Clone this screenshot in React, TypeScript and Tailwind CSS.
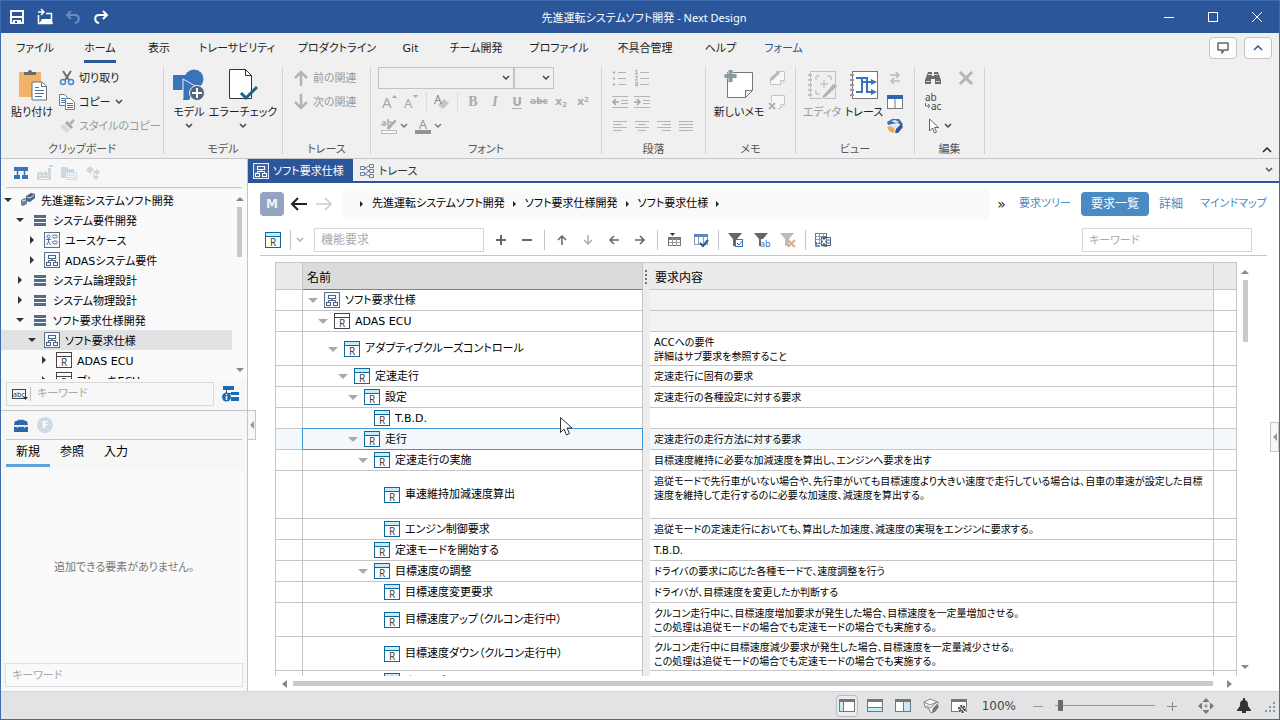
import { ReactNode } from 'react';
import clsx from 'clsx';

type SvgProps = { w?: number; h?: number; children: ReactNode; className?: string };

function Svg({ w = 16, h = 16, children, className }: SvgProps) {
  return (
    <svg width={w} height={h} viewBox={`0 0 ${w} ${h}`} fill="none" className={clsx('shrink-0 overflow-visible', className)} aria-hidden="true">
      {children}
    </svg>
  );
}

/* ---------- shared icons ---------- */

const ChevronDown = ({ color = '#444' }: { color?: string }) => (
  <Svg w={8} h={6}>
    <path d="M1 1l3 3 3-3" stroke={color} strokeWidth="1.5" />
  </Svg>
);

const RIcon = ({ dark }: { dark?: boolean }) => (
  <Svg>
    <rect x="0.5" y="0.5" width="15" height="15" fill="#fff" stroke={dark ? '#4a4048' : '#0f6a9c'} />
    {!dark && <rect x="1" y="1" width="14" height="3" fill="#c8ebf7" />}
    <path d="M1 4.5h14" stroke={dark ? '#4a4048' : '#0f6a9c'} />
    <text x="8" y="14" fontSize="10" textAnchor="middle" fill="#444" fontFamily="Noto Sans, sans-serif">R</text>
  </Svg>
);

const DiagramIcon = ({ light }: { light?: boolean }) => (
  <Svg>
    <rect x="0.5" y="0.5" width="15" height="15" fill={light ? '#47689c' : '#f4f7fa'} stroke={light ? '#e5ebf4' : '#5b6f8c'} />
    <g stroke={light ? '#fff' : '#4d6485'}>
      <rect x="4.5" y="3.5" width="7" height="3" />
      <rect x="2.5" y="10.5" width="4" height="3" />
      <rect x="9.5" y="10.5" width="4" height="3" />
      <path d="M8 7v1.5M4.5 10.5V8.5h7v2" />
    </g>
  </Svg>
);

const UseCaseIcon = () => (
  <Svg>
    <rect x="0.5" y="0.5" width="15" height="15" fill="#f8fafc" stroke="#5b6f8c" />
    <g stroke="#5b6f8c">
      <circle cx="4.5" cy="4.5" r="1.5" />
      <path d="M2 7.5h5M4.5 6v4M2.5 13l2-3 2 3" />
      <ellipse cx="11" cy="4.5" rx="2.5" ry="1.5" />
      <ellipse cx="11" cy="10.5" rx="2.5" ry="1.5" />
    </g>
  </Svg>
);

const LayersIcon = () => (
  <Svg w={12} h={11}>
    <path d="M0 0h12v3H0zM0 4h12v3H0zM0 8h12v3H0z" fill="#556b8a" />
  </Svg>
);

const ProjectIcon = () => (
  <Svg>
    <path d="M1 8l4-2 2 1v5l-4 2-2-1z" fill="#6d7f99" />
    <path d="M6 4l5-3 4 1v4l-5 4-4-1z" fill="#4d6485" />
    <path d="M7 5l3 1 4-3" stroke="#dfe6ee" />
    <path d="M2 9l4-1" stroke="#dfe6ee" />
  </Svg>
);

/* ---------- title bar ---------- */

function TitleBar() {
  return (
    <header className="flex h-8 shrink-0 items-center bg-[#2b579a] text-white">
      <div className="flex flex-1 items-center gap-3 pl-2">
        <button aria-label="保存">
          <Svg>
            <path d="M2 2h12v12H2z" stroke="#fff" strokeWidth="2" />
            <path d="M2 8h12" stroke="#fff" strokeWidth="2" />
            <path d="M4 11h8v4H4z" fill="#fff" />
            <path d="M6 12h2v2H6z" fill="#2b579a" />
          </Svg>
        </button>
        <button aria-label="開く">
          <Svg>
            <path d="M1.5 6v8.5h13V4.5H9" stroke="#fff" strokeWidth="1.5" />
            <path d="M2 15l3-5h9l2 5z" fill="#fff" />
            <path d="M1 3h6M4 0l3 3-3 3" stroke="#fff" strokeWidth="1.5" />
          </Svg>
        </button>
        <button aria-label="元に戻す">
          <Svg>
            <path d="M6 2L2 6l4 4M2 6h8c5 0 5 7 0 8" stroke="#6d8cbd" strokeWidth="2" />
          </Svg>
        </button>
        <button aria-label="やり直し">
          <Svg>
            <path d="M10 2l4 4-4 4M14 6H6c-5 0-5 7 0 8" stroke="#fff" strokeWidth="2" />
          </Svg>
        </button>
      </div>
      <h1 className="pt-0.5 font-['Noto_Sans','Noto_Sans_CJK_JP',sans-serif] text-[11px]">先進運転システムソフト開発 - Next Design</h1>
      <div className="flex flex-1 items-center justify-end">
        <button aria-label="最小化" className="grid h-8 w-11 place-items-center">
          <Svg w={10} h={10}><path d="M0 5.5h10" stroke="#fff" /></Svg>
        </button>
        <button aria-label="最大化" className="grid h-8 w-11 place-items-center">
          <Svg w={10} h={10}><rect x="0.5" y="0.5" width="9" height="9" stroke="#fff" /></Svg>
        </button>
        <button aria-label="閉じる" className="grid h-8 w-11 place-items-center">
          <Svg w={10} h={10}><path d="M0 0l10 10M10 0L0 10" stroke="#fff" /></Svg>
        </button>
      </div>
    </header>
  );
}

/* ---------- ribbon ---------- */

const menuTabs = [
  { label: 'ファイル', width: 'w-[68px]' },
  { label: 'ホーム', width: 'w-[62px]', active: true },
  { label: '表示', width: 'w-[56px]' },
  { label: 'トレーサビリティ', width: 'w-[100px]' },
  { label: 'プロダクトライン', width: 'w-[100px]' },
  { label: 'Git', width: 'w-[47px]' },
  { label: 'チーム開発', width: 'w-[84px]' },
  { label: 'プロファイル', width: 'w-[82px]' },
  { label: '不具合管理', width: 'w-[90px]' },
  { label: 'ヘルプ', width: 'w-[61px]' },
  { label: 'フォーム', width: 'w-[65px]', accent: true },
];

function MenuTabs() {
  return (
    <nav className="flex h-[33px] shrink-0 items-center">
      {menuTabs.map((tab) => (
        <button key={tab.label} className={clsx('flex h-full justify-center whitespace-nowrap pt-1', tab.width, tab.accent ? 'text-[#2b579a]' : 'text-[#222]')}>
          <span className={clsx('h-[26px] border-b-[3px] leading-6', tab.active ? 'border-[#2b579a]' : 'border-transparent')}>{tab.label}</span>
        </button>
      ))}
      <div className="ml-auto flex gap-[7px] pr-[7px] pb-[3px]">
        <button aria-label="フィードバック" className="grid h-[22px] w-7 place-items-center rounded-sm border border-[#c4c4c4] bg-[#fdfdfd]">
          <Svg w={12} h={12}><path d="M1 1h10v7H7l-2 3V8H1z" stroke="#666" strokeWidth="1.5" strokeLinejoin="round" /></Svg>
        </button>
        <button aria-label="リボンを閉じる" className="grid h-[22px] w-7 place-items-center rounded-sm border border-[#c4c4c4] bg-[#fdfdfd]">
          <Svg w={10} h={6}><path d="M1 5l4-4 4 4" stroke="#2b579a" strokeWidth="1.5" /></Svg>
        </button>
      </div>
    </nav>
  );
}

function Group({ label, width, children }: { label: string; width: string; children: ReactNode }) {
  return (
    <>
      <section className={clsx('flex shrink-0 flex-col', width)}>
        <div className="flex h-[72px] shrink-0">{children}</div>
        <div className="h-5 shrink-0 text-center leading-6 text-[#555]">{label}</div>
      </section>
      <div className="mt-px h-[87px] w-px shrink-0 bg-[#d2d2d2]" />
    </>
  );
}

function BigButton({ label, icon, width, menu, disabled }: { label: string; icon: ReactNode; width: string; menu?: boolean; disabled?: boolean }) {
  return (
    <button disabled={disabled} className={clsx('flex shrink-0 flex-col items-center whitespace-nowrap pt-[3px]', width, disabled ? 'text-[#999]' : 'text-[#222]')}>
      {icon}
      <span className="mt-[3px] leading-[18px]">{label}</span>
      {menu && <span className="mt-px leading-3"><ChevronDown /></span>}
    </button>
  );
}

function RowButton({ label, icon, disabled, menu }: { label: string; icon: ReactNode; disabled?: boolean; menu?: boolean }) {
  return (
    <button disabled={disabled} className={clsx('flex h-6 items-center gap-1 whitespace-nowrap', disabled ? 'text-[#999]' : 'text-[#222]')}>
      {icon}
      <span className="pt-0.5">{label}</span>
      {menu && <ChevronDown />}
    </button>
  );
}

function Tool({ label, children }: { label: string; children: ReactNode }) {
  return (
    <button aria-label={label} className="grid h-6 w-[22px] shrink-0 place-items-center text-[#a6adb3]">
      {children}
    </button>
  );
}

const lineSets = {
  left: 'M1 2.5h14M1 5.5h9M1 8.5h14M1 11.5h9',
  center: 'M1 2.5h14M4 5.5h8M1 8.5h14M4 11.5h8',
  right: 'M1 2.5h14M6 5.5h9M1 8.5h14M6 11.5h9',
  full: 'M1 2.5h14M1 5.5h14M1 8.5h14M1 11.5h14',
};

const Lines = ({ d }: { d: string }) => (
  <Svg w={16} h={14}><path d={d} stroke="#b4b4b4" /></Svg>
);

function Combo({ label, width }: { label: string; width: string }) {
  return (
    <div className={clsx('relative', width)}>
      <select aria-label={label} className="block h-[22px] w-full appearance-none border border-[#c3c3c3] bg-[#f0f0f0]">
        <option></option>
      </select>
      <span className="pointer-events-none absolute top-2 right-1"><ChevronDown /></span>
    </div>
  );
}

function Ribbon() {
  return (
    <div className="flex h-[92px] shrink-0">
      <Group label="クリップボード" width="w-[162px]">
        <BigButton
          width="w-[57px] pl-[5px]"
          label="貼り付け"
          icon={
            <Svg w={32} h={32}>
              <rect x="3" y="3" width="22" height="25" rx="1" fill="#f2b366" />
              <path d="M8 6V3h4a2 2 0 014 0h4v3z" fill="#6b6b6b" />
              <path d="M16 13h10l4.5 4v14H16z" fill="#fff" stroke="#6f6f6f" />
              <path d="M25.5 13.5v4h5" stroke="#6f6f6f" />
              <path d="M19 18.5h4M19 21.5h9M19 24.5h9M19 27.5h7" stroke="#3a74b8" />
            </Svg>
          }
        />
        <div className="flex flex-col pl-[1px]">
          <RowButton
            label="切り取り"
            icon={
              <Svg>
                <path d="M4 1l6 9M12 1L6 10" stroke="#6b6b6b" strokeWidth="2" />
                <circle cx="4" cy="12" r="2.5" stroke="#4a86c5" strokeWidth="1.5" />
                <circle cx="12" cy="12" r="2.5" stroke="#4a86c5" strokeWidth="1.5" />
              </Svg>
            }
          />
          <RowButton
            label="コピー"
            menu
            icon={
              <Svg>
                <path d="M0.5 0.5h5l3 3v8h-8z" fill="#fff" stroke="#777" />
                <path d="M2 4.5h4M2 6.5h4M2 8.5h4" stroke="#3a74b8" />
                <path d="M6.5 4.5h5l4 4v7h-9z" fill="#fff" stroke="#777" />
                <path d="M8 9.5h6M8 11.5h6M8 13.5h6" stroke="#3a74b8" />
              </Svg>
            }
          />
          <RowButton
            label="スタイルのコピー"
            disabled
            icon={
              <Svg>
                <path d="M10 5l4-4 2 2-4 4z" fill="#b5b5b5" />
                <path d="M8 3l6 6-2 2-6-6z" fill="#a8a8a8" />
                <path d="M5 6l6 6-4 3-6-7z" fill="#d5d9db" />
              </Svg>
            }
          />
        </div>
      </Group>

      <Group label="モデル" width="w-[118px]">
        <BigButton
          width="w-[46px] pl-1"
          label="モデル"
          menu
          icon={
            <Svg w={32} h={32}>
              <rect x="0" y="6" width="16" height="15" fill="#3a74b8" />
              <circle cx="21" cy="10" r="9.5" fill="#3a74b8" />
              <path d="M10 12l13 7-7 12h-6z" fill="#3a74b8" />
              <path d="M10 30V10l14 8" stroke="#f0f0f0" />
              <circle cx="24" cy="24" r="7.5" fill="#55657d" stroke="#f0f0f0" />
              <path d="M24 19v10M19 24h10" stroke="#fff" strokeWidth="2" />
            </Svg>
          }
        />
        <BigButton
          width="w-[66px]"
          label="エラーチェック"
          menu
          icon={
            <Svg w={28} h={32}>
              <path d="M0.5 0.5h16l6 6v23H0.5z" fill="#fff" stroke="#333" />
              <path d="M16.5 0.5v6h6" stroke="#333" />
              <path d="M12 24l5 5 11-11" stroke="#17628f" strokeWidth="3" />
            </Svg>
          }
        />
      </Group>

      <Group label="トレース" width="w-[87px]">
        <div className="flex flex-col pl-2.5">
          <RowButton disabled label="前の関連" icon={<Svg><path d="M8 16V2M2 8l6-6 6 6" stroke="#b0b4b8" strokeWidth="2.5" /></Svg>} />
          <RowButton disabled label="次の関連" icon={<Svg><path d="M8 0v14M2 8l6 6 6-6" stroke="#b0b4b8" strokeWidth="2.5" /></Svg>} />
        </div>
      </Group>

      <Group label="フォント" width="w-[230px]">
        <div className="flex flex-col pl-[7px]">
          <div className="flex h-6 items-center">
            <Combo label="フォント名" width="w-[136px]" />
            <Combo label="フォントサイズ" width="w-10" />
          </div>
          <div className="flex h-6 items-center">
            <Tool label="拡大">
              <Svg>
                <text x="1" y="14" fontSize="15" fill="#a5a9ac" fontFamily="Noto Sans, sans-serif">A</text>
                <path d="M11 4l2.5-3L16 4z" fill="#aaa" />
              </Svg>
            </Tool>
            <Tool label="縮小">
              <Svg>
                <text x="1" y="14" fontSize="13" fill="#a5a9ac" fontFamily="Noto Sans, sans-serif">A</text>
                <path d="M10 1l2.5 3L15 1z" fill="#aaa" />
              </Svg>
            </Tool>
            <span className="mx-1 h-5 w-px bg-[#dcdcdc]" />
            <Tool label="書式クリア">
              <Svg>
                <path d="M4 11l6-6 5 4-6 6z" fill="#c6c6c6" />
                <text x="0" y="10" fontSize="12" fill="#888" fontFamily="Noto Sans, sans-serif">A</text>
              </Svg>
            </Tool>
            <span className="mx-1 h-5 w-px bg-[#dcdcdc]" />
            <Tool label="太字"><span className="font-['Liberation_Serif',serif] text-sm font-bold">B</span></Tool>
            <Tool label="斜体"><span className="font-['Liberation_Serif',serif] text-sm font-bold italic">I</span></Tool>
            <Tool label="下線"><span className="text-xs font-bold underline underline-offset-2">U</span></Tool>
            <Tool label="取り消し線"><span className="text-[9px] font-bold line-through">abc</span></Tool>
            <Tool label="下付き"><span className="leading-3 font-bold">x<sub className="text-[7px]">2</sub></span></Tool>
            <Tool label="上付き"><span className="leading-3 font-bold">x<sup className="text-[7px]">2</sup></span></Tool>
          </div>
          <div className="flex h-6 items-center">
            <Tool label="蛍光ペン">
              <Svg>
                <text x="0" y="8" fontSize="9" fontWeight="bold" fill="#aaa" fontFamily="Noto Sans, sans-serif">ab</text>
                <path d="M6 10l8-8 1 1-7 8z" fill="#aaa" stroke="#aaa" />
                <rect x="0.5" y="12.5" width="15" height="3" stroke="#bbb" fill="#fafafa" />
              </Svg>
            </Tool>
            <ChevronDown color="#777" />
            <span className="w-1" />
            <Tool label="文字色">
              <Svg>
                <text x="8" y="11" fontSize="13" textAnchor="middle" fill="#999" fontFamily="Noto Sans, sans-serif">A</text>
                <rect x="0" y="12" width="16" height="4" fill="#929292" />
              </Svg>
            </Tool>
            <ChevronDown color="#777" />
          </div>
        </div>
      </Group>

      <Group label="段落" width="w-[103px]">
        <div className="flex flex-col pl-[7px]">
          <div className="flex">
            <Tool label="箇条書き">
              <Svg>
                <path d="M6 2.5h8M6 8.5h8M6 14.5h8" stroke="#b4b4b4" />
                <path d="M1 1.5h2v2H1zM1 7.5h2v2H1zM1 13.5h2v2H1z" fill="#a8a8a8" />
              </Svg>
            </Tool>
            <Tool label="段落番号">
              <Svg>
                <path d="M6 2.5h9M6 8.5h9M6 14.5h9" stroke="#b4b4b4" />
                <path d="M1 1l1.5-1v4M1 4h3M1 6.5h2.5v1.5l-2.5 2h3M1 12.5h2.5v3.5H1M1.5 14.5h2" stroke="#aaa" />
              </Svg>
            </Tool>
          </div>
          <div className="flex">
            <Tool label="インデント解除">
              <Svg w={16} h={14}>
                <path d="M0 1.5h16M9 5.5h7M9 8.5h7M0 12.5h16" stroke="#b4b4b4" />
                <path d="M1 7h6M4 4L1 7l3 3" stroke="#a5a5a5" strokeWidth="1.5" />
              </Svg>
            </Tool>
            <Tool label="インデント">
              <Svg w={16} h={14}>
                <path d="M0 1.5h16M9 5.5h7M9 8.5h7M0 12.5h16" stroke="#b4b4b4" />
                <path d="M0 7h6M3 4l3 3-3 3" stroke="#a5a5a5" strokeWidth="1.5" />
              </Svg>
            </Tool>
          </div>
          <div className="flex">
            <Tool label="左揃え"><Lines d={lineSets.left} /></Tool>
            <Tool label="中央揃え"><Lines d={lineSets.center} /></Tool>
            <Tool label="右揃え"><Lines d={lineSets.right} /></Tool>
            <Tool label="両端揃え"><Lines d={lineSets.full} /></Tool>
          </div>
        </div>
      </Group>

      <Group label="メモ" width="w-[89px]">
        <BigButton
          width="w-[60px] pl-[6px]"
          label="新しいメモ"
          icon={
            <Svg w={32} h={32}>
              <path d="M4.5 3.5h25v18l-7 7h-18z" fill="#fff" stroke="#777" />
              <path d="M22.5 28.5v-7h7z" fill="#f0f0f0" stroke="#777" />
              <path d="M7.5 0v14M0.5 7h14" stroke="#f0f0f0" strokeWidth="5" />
              <path d="M7.5 1v12M1.5 7h12" stroke="#8b9a9e" strokeWidth="4" />
            </Svg>
          }
        />
        <div className="flex flex-col">
          <Tool label="メモ編集">
            <Svg>
              <path d="M7 1.5h8.5v9l-4 4h-10V8" fill="#f8f8f8" stroke="#c4c4c4" />
              <path d="M11.5 14v-3.5h4" stroke="#c4c4c4" />
              <path d="M1 11l1-4 7-6 2 2-7 7z" fill="#b8b8b8" />
            </Svg>
          </Tool>
          <Tool label="メモ削除">
            <Svg>
              <path d="M2.5 8V1.5h13v9l-4 4H9" fill="#f8f8f8" stroke="#c4c4c4" />
              <path d="M11.5 14v-3.5h4" stroke="#c4c4c4" />
              <path d="M0 9l6 6M6 9l-6 6" stroke="#b3b3b3" strokeWidth="2" />
            </Svg>
          </Tool>
        </div>
      </Group>

      <Group label="ビュー" width="w-[118px]">
        <BigButton
          width="w-[48px] pl-1"
          label="エディタ"
          disabled
          icon={
            <Svg w={32} h={32}>
              <rect x="4.5" y="2.5" width="25" height="27" stroke="#c0c0c0" />
              <path d="M4 5v24" stroke="#c0c0c0" strokeWidth="4" strokeDasharray="2 3" />
              <path d="M10 11V7h4M21 7h4v4M10 21v4h4" stroke="#b5b5b5" />
              <path d="M18 11v8M14 15h8" stroke="#b5b5b5" />
              <path d="M15 31l2-5 11-12 4 3-12 11z" fill="#b3b3b3" stroke="#f0f0f0" />
            </Svg>
          }
        />
        <BigButton
          width="w-[40px]"
          label="トレース"
          icon={
            <Svg w={32} h={32}>
              <rect x="4.5" y="2.5" width="25" height="27" fill="#fff" stroke="#777" />
              <path d="M4 5v24" stroke="#999" strokeWidth="4" strokeDasharray="2 3" />
              <path d="M8 9h11v14h5M8 23h6V13h10M14 13V10" stroke="#3a74b8" strokeWidth="2" />
              <path d="M23 10l6 3-6 3zM23 20l6 3-6 3z" fill="#3a74b8" />
            </Svg>
          }
        />
        <div className="flex flex-col">
          <Tool label="切替">
            <Svg w={14} h={14}>
              <path d="M2 4h9M8 1l3 3-3 3M12 10H3M6 7l-3 3 3 3" stroke="#b8bcc0" strokeWidth="1.5" />
            </Svg>
          </Tool>
          <Tool label="分割">
            <Svg w={16} h={14}>
              <rect x="0.5" y="0.5" width="15" height="13" fill="#fff" stroke="#777" />
              <rect x="0" y="0" width="16" height="4" fill="#2f66b0" />
              <path d="M8 4v10" stroke="#777" />
            </Svg>
          </Tool>
          <Tool label="スタイル">
            <Svg>
              <path d="M0 4l5-3 7 0 4 5-1 2-4-3-6 1-4 1z" fill="#3a6fb5" />
              <path d="M4 3l4-1 4 2-3 1z" fill="#e4edf7" />
              <path d="M0 9l3-1 4 2 1 3-2 2-4-2z" fill="#f0a94c" />
              <path d="M3 7l5 1 3-2-3 4z" fill="#cfe0f2" />
              <path d="M8 15l1-4 5-5 2 3-5 6z" fill="#2b579a" />
            </Svg>
          </Tool>
        </div>
      </Group>

      <Group label="編集" width="w-[69px]">
        <div className="flex flex-col pl-[7px]">
          <div className="flex">
            <Tool label="検索">
              <Svg>
                <path d="M3 2h4v4h2V2h4l3 8v4h-6V9H6v5H0v-4z" fill="#6b6b6b" />
                <path d="M1 11.5h4M11 11.5h4M3 4.5h4M9 4.5h4" stroke="#d0d0d0" />
              </Svg>
            </Tool>
            <span className="w-[11px]" />
            <Tool label="削除">
              <Svg w={14} h={14}><path d="M1 1l12 12M13 1L1 13" stroke="#b5b5b5" strokeWidth="3" /></Svg>
            </Tool>
          </div>
          <Tool label="置換">
            <Svg w={18} h={18}>
              <g fontSize="10" fill="#444" fontFamily="Noto Sans, sans-serif">
                <text x="1" y="8">ab</text>
                <text x="7" y="17">ac</text>
              </g>
              <path d="M1.5 10v3h4M4 11l2 2-2 2" stroke="#3a74b8" />
            </Svg>
          </Tool>
          <div className="flex items-center">
            <Tool label="選択">
              <Svg w={12} h={16}><path d="M2.5 1v12l3-3 2 5 2-1-2-4.5h4z" fill="#fff" stroke="#666" /></Svg>
            </Tool>
            <ChevronDown />
          </div>
        </div>
      </Group>
      <button aria-label="リボンを折りたたむ" className="mt-auto mr-[7px] mb-[3px] ml-auto grid h-2.5 w-2.5 place-items-center">
        <Svg w={10} h={6}><path d="M1 5l4-4 4 4" stroke="#222" strokeWidth="1.5" /></Svg>
      </button>
    </div>
  );
}

/* ---------- left pane ---------- */

const modelTree: { label: string; level: number; icon: ReactNode; open?: boolean; selected?: boolean }[] = [
  { label: '先進運転システムソフト開発', level: 0, icon: <ProjectIcon />, open: true },
  { label: 'システム要件開発', level: 1, icon: <LayersIcon />, open: true },
  { label: 'ユースケース', level: 2, icon: <UseCaseIcon /> },
  { label: 'ADASシステム要件', level: 2, icon: <DiagramIcon /> },
  { label: 'システム論理設計', level: 1, icon: <LayersIcon /> },
  { label: 'システム物理設計', level: 1, icon: <LayersIcon /> },
  { label: 'ソフト要求仕様開発', level: 1, icon: <LayersIcon />, open: true },
  { label: 'ソフト要求仕様', level: 2, icon: <DiagramIcon />, open: true, selected: true },
  { label: 'ADAS ECU', level: 3, icon: <RIcon dark /> },
  { label: 'ブレーキECU', level: 3, icon: <RIcon dark /> },
];

const UpArrow = () => <Svg w={8} h={5}><path d="M0 5l4-4 4 4z" fill="#888" /></Svg>;
const DownArrow = () => <Svg w={8} h={5}><path d="M0 0l4 4 4-4z" fill="#888" /></Svg>;

function ModelTree() {
  return (
    <div className="flex h-[189px] bg-[#fafafa]">
      <ul className="min-w-0 flex-1 overflow-hidden">
        {modelTree.map((node) => (
          <li
            key={node.label}
            className={clsx('flex h-5 items-center whitespace-nowrap text-black', node.selected && 'bg-[#e1e2e4]')}
            style={{ paddingLeft: 1 + node.level * 12 }}
          >
            <span className="grid w-3 shrink-0 place-items-center">
              {node.open ? (
                <Svg w={8} h={5}><path d="M0 0h8L4 4z" fill="#333" /></Svg>
              ) : (
                <Svg w={5} h={8}><path d="M0 0v8l4-4z" fill="#333" /></Svg>
              )}
            </span>
            <span className="mr-[5px] ml-1.5 grid w-4 shrink-0 place-items-center">{node.icon}</span>
            <span className="pt-1 leading-4">{node.label}</span>
          </li>
        ))}
      </ul>
      <div className="flex w-[15px] flex-col items-center py-1.5">
        <UpArrow />
        <div className="mt-1.5 h-[50px] w-[5px] bg-[#c9c9c9]" />
        <span className="mt-auto"><DownArrow /></span>
      </div>
    </div>
  );
}

function LeftPane() {
  return (
    <aside className="flex w-[247px] shrink-0 flex-col border-r border-[#c2c4c8] bg-[#f6f7f6]">
      <div className="mx-[5px] mb-0.5 flex h-[29px] shrink-0 items-center gap-2 border-b border-[#c6c6c6] pl-[7px]">
        <button aria-label="モデル">
          <Svg>
            <path d="M1 2h14v4H1z" fill="#3a74b8" />
            <path d="M4.5 6v5M11.5 6v5" stroke="#3a74b8" strokeWidth="1.5" />
            <path d="M1 10h6v4H1zM9 10h6v4H9z" fill="#3a74b8" />
          </Svg>
        </button>
        <button aria-label="プロダクトライン">
          <Svg>
            <path d="M0 15V8l5-2v2l5-2v2h1V3h3v12z" fill="#ccd8df" />
            <path d="M10 1.5h5M2 10.5h2M6 10.5h2M10 10.5h2M2 13.5h10" stroke="#f0f4f6" />
            <path d="M12 1h4" stroke="#ccd8df" strokeWidth="2" />
          </Svg>
        </button>
        <button aria-label="成果物">
          <Svg>
            <path d="M0 2h6l1 2h6v3H5v6H0z" fill="#ccd8df" />
            <rect x="6.5" y="7.5" width="9" height="7" fill="#f6f7f6" stroke="#ccd8df" />
            <path d="M8 10h6M8 12.5h6" stroke="#ccd8df" />
          </Svg>
        </button>
        <button aria-label="構成">
          <Svg>
            <path d="M5 1l4 3-3 3 1 2-3-1-3-3z" fill="#ccd8df" />
            <path d="M8 7h5M9 5v7h3" stroke="#ccd8df" />
            <path d="M12 4l3 3-3 3-3-3zM11 10l3 2-3 3-3-3z" fill="#ccd8df" />
          </Svg>
        </button>
      </div>
      <ModelTree />
      <div className="mt-[3px] mr-2 mb-[3px] ml-[5px] flex h-6 shrink-0 items-center">
        <div className="flex h-6 flex-1 items-center border border-[#d8dadd]">
          <button aria-label="検索条件" className="flex w-6 justify-center border-r border-[#c2c4c8] pl-1">
            <Svg w={18} h={14}>
              <rect x="0.5" y="2.5" width="13" height="9" stroke="#444" />
              <text x="1" y="10" fontSize="7" fill="#333" fontFamily="Noto Sans, sans-serif">abc</text>
              <path d="M11 10h5l-2.5 3z" fill="#333" />
            </Svg>
          </button>
          <input aria-label="モデル検索" placeholder="キーワード" className="min-w-0 flex-1 bg-transparent px-1.5 placeholder:text-[#a8a8a8]" />
        </div>
        <button aria-label="情報" className="ml-2">
          <Svg w={17} h={16}>
            <path d="M1 0h11v4H1zM9 6h8v3H9zM9 11h8v4H9z" fill="#1a6cb5" />
            <path d="M4.5 4v3M4 7.5h5" stroke="#555" />
            <circle cx="4.5" cy="11" r="4.5" fill="#1a6cb5" />
            <path d="M4.5 10v4M4.5 8v1" stroke="#fff" strokeWidth="1.5" />
          </Svg>
        </button>
      </div>

      <div className="mt-px flex flex-1 flex-col border-t border-[#c2c4c8]">
        <div className="mx-[5px] flex h-[29px] items-center gap-2 border-b border-[#c6c6c6] pl-[7px]">
          <button aria-label="ツールボックス">
            <Svg>
              <path d="M5 3.5h6M5 5V3M11 5V3" stroke="#3a74b8" strokeWidth="1.5" />
              <path d="M2 4h12l1 4H1zM1 9h14v6H1z" fill="#2f66b0" />
              <path d="M1 9.5h14M4.5 8v3M11.5 8v3" stroke="#cfe0f2" />
            </Svg>
          </button>
          <button aria-label="F" className="h-4 w-4 rounded-full bg-[#cfdbe2] text-center text-[9px] leading-4 font-bold text-white">F</button>
        </div>
        <div className="flex pl-[5px] text-xs text-black">
          <button className="h-[27px] w-11 border-b-[3px] border-[#5ea3da]">新規</button>
          <button className="h-[27px] w-11 border-b-[3px] border-transparent">参照</button>
          <button className="h-[27px] w-11 border-b-[3px] border-transparent">入力</button>
        </div>
        <div className="mx-1 mt-[3px] flex flex-1 flex-col bg-[#fafafa]">
          <p className="flex flex-1 items-center justify-center pt-1 text-[#777]">追加できる要素がありません。</p>
          <input aria-label="要素検索" placeholder="キーワード" className="mb-1 h-6 w-full border border-[#dcdee0] bg-[#fafafa] px-1.5 placeholder:text-[#a8a8a8]" />
        </div>
      </div>
    </aside>
  );
}

/* ---------- editor ---------- */

const requirements: { name: string; level: number; height: string; text?: string; kind?: string; open?: boolean; selected?: boolean; muted?: boolean }[] = [
  { name: 'ソフト要求仕様', level: 0, height: 'h-[21px]', kind: 'diagram', open: true, muted: true },
  { name: 'ADAS ECU', level: 1, height: 'h-[21px]', kind: 'dark', open: true, muted: true },
  { name: 'アダプティブクルーズコントロール', level: 2, height: 'h-[34px]', open: true, text: 'ACCへの要件\n詳細はサブ要求を参照すること' },
  { name: '定速走行', level: 3, height: 'h-[21px]', open: true, text: '定速走行に固有の要求' },
  { name: '設定', level: 4, height: 'h-[21px]', open: true, text: '定速走行の各種設定に対する要求' },
  { name: 'T.B.D.', level: 5, height: 'h-[21px]' },
  { name: '走行', level: 4, height: 'h-[21px]', open: true, selected: true, text: '定速走行の走行方法に対する要求' },
  { name: '定速走行の実施', level: 5, height: 'h-[21px]', open: true, text: '目標速度維持に必要な加減速度を算出し、エンジンへ要求を出す' },
  {
    name: '車速維持加減速度算出',
    level: 6,
    height: 'h-[48px]',
    text: '追従モードで先行車がいない場合や、先行車がいても目標速度より大きい速度で走行している場合は、自車の車速が設定した目標\n速度を維持して走行するのに必要な加速度、減速度を算出する。\n ',
  },
  { name: 'エンジン制御要求', level: 6, height: 'h-[21px]', text: '追従モードの定速走行においても、算出した加速度、減速度の実現をエンジンに要求する。' },
  { name: '定速モードを開始する', level: 5, height: 'h-[21px]', text: 'T.B.D.' },
  { name: '目標速度の調整', level: 5, height: 'h-[21px]', open: true, text: 'ドライバの要求に応じた各種モードで、速度調整を行う' },
  { name: '目標速度変更要求', level: 6, height: 'h-[21px]', text: 'ドライバが、目標速度を変更したか判断する' },
  { name: '目標速度アップ（クルコン走行中）', level: 6, height: 'h-[34px]', text: 'クルコン走行中に、目標速度増加要求が発生した場合、目標速度を一定量増加させる。\nこの処理は追従モードの場合でも定速モードの場合でも実施する。' },
  { name: '目標速度ダウン（クルコン走行中）', level: 6, height: 'h-[34px]', text: 'クルコン走行中に目標速度減少要求が発生した場合、目標速度を一定量減少させる。\nこの処理は追従モードの場合でも定速モードの場合でも実施する。' },
  { name: 'クルーズコントロール', level: 6, height: 'h-[21px]', text: 'クルーズコントロールシステムのスイッチがオンになったときのみ、クルーズコントロールモードにする。' },
];

function RequirementTable() {
  return (
    <table className="w-full table-fixed border-separate border-spacing-0 border-t border-l border-[#c6c6c6] text-left text-black">
      <colgroup>
        <col className="w-[27px]" />
        <col className="w-[340px]" />
        <col className="w-[7px]" />
        <col />
        <col className="w-[23px]" />
      </colgroup>
      <thead>
        <tr className="h-[27px] bg-[#ebebeb] text-xs">
          <th className="border-r border-b border-[#c6c6c6]"></th>
          <th className="border-r border-b border-r-[#c6c6c6] border-b-[#3c97d9] bg-[#dadcdb] px-1 pt-1 font-normal">名前</th>
          <th className="px-[2px]">
            <Svg w={2} h={16}><path d="M1 1v14" stroke="#777" strokeWidth="2" strokeDasharray="2 2" /></Svg>
          </th>
          <th className="border-r border-b border-[#c6c6c6] px-[5px] pt-1 font-normal">要求内容</th>
          <th className="border-r border-b border-[#c6c6c6]"></th>
        </tr>
      </thead>
      <tbody className="leading-[14px]">
        {requirements.map((row) => (
          <tr key={row.name} className={clsx(row.height, row.selected ? 'bg-[#f3f8fc]' : 'bg-white')}>
            <td className="border-r border-b border-[#c6c6c6]"></td>
            <td className="relative border-r border-b border-[#c6c6c6] p-0">
              <div className="flex items-center whitespace-nowrap" style={{ paddingLeft: 5 + row.level * 10 }}>
                <span className="mt-0.5 w-4 shrink-0">
                  {row.open && <Svg w={10} h={6}><path d="M0 0h10L5 5z" fill="#a7abb0" /></Svg>}
                </span>
                {row.kind === 'diagram' ? <DiagramIcon /> : <RIcon dark={row.kind === 'dark'} />}
                <span className="ml-[5px] pt-px">{row.name}</span>
              </div>
              {row.selected && <span className="pointer-events-none absolute -inset-px border border-[#3c97d9]" />}
            </td>
            <td className="bg-[#ededed]"></td>
            <td className={clsx('overflow-hidden border-r border-b border-[#c6c6c6] px-1 pt-0.5 pb-0 text-[10px] whitespace-pre', row.muted && 'bg-[#f3f3f3]')}>{row.text}</td>
            <td className="border-r border-b border-[#c6c6c6]"></td>
          </tr>
        ))}
      </tbody>
    </table>
  );
}

const Sep = () => <span className="mx-1 h-5 w-px bg-[#c6c6c6]" />;

function EditorButton({ label, children }: { label: string; children: ReactNode }) {
  return (
    <button aria-label={label} className="grid h-6 w-[26px] shrink-0 place-items-center">
      {children}
    </button>
  );
}

const funnel = 'M0 1h14L9 7v7H5V7z';

const Crumb = () => <Svg w={4} h={6}><path d="M0 0v6l3-3z" fill="#222" /></Svg>;

function EditorToolbar() {
  return (
    <div className="mx-3 flex h-[31px] shrink-0 items-center border-b border-[#c6c6c6] pr-[15px] pl-[5px]">
      <RIcon />
      <span className="ml-[9px] h-5 w-px bg-[#c6c6c6]" />
      <span className="mx-[5px]"><ChevronDown color="#aaa" /></span>
      <input aria-label="要求種別" placeholder="機能要求" className="ml-[5px] h-6 w-[170px] border border-[#d5d8da] px-1.5 text-xs placeholder:text-[#aaa]" />
      <div className="flex items-center pl-1">
        <EditorButton label="追加"><Svg w={10} h={10}><path d="M5 0v10M0 5h10" stroke="#666" strokeWidth="2" /></Svg></EditorButton>
        <EditorButton label="削除"><Svg w={10} h={10}><path d="M0 5h10" stroke="#666" strokeWidth="2" /></Svg></EditorButton>
        <Sep />
        <EditorButton label="上へ"><Svg w={10} h={10}><path d="M5 10V1M1 5l4-4 4 4" stroke="#666" strokeWidth="1.5" /></Svg></EditorButton>
        <EditorButton label="下へ"><Svg w={10} h={10}><path d="M5 0v9M1 5l4 4 4-4" stroke="#aaa" strokeWidth="1.5" /></Svg></EditorButton>
        <EditorButton label="左へ"><Svg w={10} h={10}><path d="M10 5H1M5 1L1 5l4 4" stroke="#666" strokeWidth="1.5" /></Svg></EditorButton>
        <EditorButton label="右へ"><Svg w={10} h={10}><path d="M0 5h9M5 1l4 4-4 4" stroke="#666" strokeWidth="1.5" /></Svg></EditorButton>
        <Sep />
        <EditorButton label="列">
          <Svg w={14} h={14}>
            <path d="M2 0h5L4.5 3z" fill="#333" />
            <rect x="0.5" y="4.5" width="12" height="8" stroke="#777" />
            <path d="M0 6h13" stroke="#777" strokeWidth="2" />
            <path d="M4.5 5v8M8.5 5v8M1 9.5h11" stroke="#999" />
          </Svg>
        </EditorButton>
        <EditorButton label="列の選択">
          <Svg w={14} h={14}>
            <rect x="0.5" y="1.5" width="13" height="10" fill="#fff" stroke="#8ba0b8" />
            <rect x="0" y="1" width="14" height="3" fill="#5f86bd" />
            <path d="M4.5 4v8M9.5 4v8" stroke="#8ba0b8" />
            <path d="M6 10l3 3 5-6" stroke="#1c5a9c" strokeWidth="2" />
          </Svg>
        </EditorButton>
        <Sep />
        <EditorButton label="フィルタ">
          <Svg>
            <path d={funnel} fill="#666" />
            <rect x="7.5" y="7.5" width="7" height="7" fill="#fff" stroke="#3a74b8" />
            <path d="M9 11l2 2 4-5" stroke="#3a74b8" />
          </Svg>
        </EditorButton>
        <EditorButton label="文字フィルタ">
          <Svg>
            <path d={funnel} fill="#666" />
            <rect x="7" y="7" width="10" height="9" fill="#fff" />
            <text x="6" y="15" fontSize="9" fill="#3a74b8" fontFamily="Noto Sans, sans-serif">ab</text>
          </Svg>
        </EditorButton>
        <EditorButton label="フィルタ解除">
          <Svg>
            <path d={funnel} fill="#b9bcc0" />
            <path d="M8 8l7 7M15 8l-7 7" stroke="#dfae85" strokeWidth="2" />
          </Svg>
        </EditorButton>
        <Sep />
        <EditorButton label="Excel出力">
          <Svg>
            <rect x="0.5" y="1.5" width="11" height="10" fill="#fff" stroke="#777" />
            <path d="M1 4.5h11M1 7.5h11M4.5 1v10M8.5 1v10" stroke="#999" />
            <path d="M1 10v4h4" stroke="#3a74b8" strokeWidth="1.5" />
            <path d="M6 5l6-1v11l-6-1z" fill="#4d6485" />
            <path d="M12 5.5h3.5v8H12M12 8h3M12 11h3" stroke="#4d6485" />
            <path d="M7 7l4 5M11 7l-4 5" stroke="#fff" strokeWidth="1.5" />
          </Svg>
        </EditorButton>
      </div>
      <input aria-label="要求検索" placeholder="キーワード" className="ml-auto h-6 w-[170px] border border-[#d5d8da] px-1.5 placeholder:text-[#aaa]" />
    </div>
  );
}

function Editor() {
  return (
    <main className="relative flex min-w-0 flex-1 flex-col bg-white">
      <div className="flex h-6 shrink-0 border-b-2 border-[#2b579a] bg-[#f0f0f0]">
        <button className="flex w-[105px] items-center gap-1 bg-[#2b579a] pt-0.5 pl-[5px] whitespace-nowrap text-white">
          <DiagramIcon light />
          <span className="pt-0.5">ソフト要求仕様</span>
        </button>
        <button className="flex items-center gap-1 pt-0.5 pl-1.5 text-[#333]">
          <Svg>
            <g stroke="#6b7f99">
              <path d="M1.5 3.5h4v3h-4zM1.5 9.5h4v3h-4zM10.5 1.5h4v3h-4zM10.5 6.5h4v3h-4zM10.5 11.5h4v3h-4z" />
              <path d="M6 5l4-2M6 5l4 3M6 11l4-3M6 11l4 2" />
            </g>
          </Svg>
          <span className="pt-0.5">トレース</span>
        </button>
        <button aria-label="タブ一覧" className="ml-auto px-1.5"><ChevronDown color="#555" /></button>
      </div>

      <div className="flex h-[42px] shrink-0 items-center pr-3 pl-3">
        <button className="h-6 w-6 rounded-sm bg-[#94a3c0] text-xs font-bold text-[#eef1f6]">M</button>
        <button aria-label="戻る" className="ml-[7px]"><Svg><path d="M16 8H1M7 2L1 8l6 6" stroke="#222" strokeWidth="2" /></Svg></button>
        <button aria-label="進む" className="ml-[9px]"><Svg><path d="M0 8h15M9 2l6 6-6 6" stroke="#ccc" strokeWidth="1.5" /></Svg></button>
        <div className="ml-2.5 flex h-[30px] flex-1 items-center gap-2 rounded-sm bg-[#fafafa] pl-[18px] whitespace-nowrap text-black">
          <Crumb />
          <a href="#project">先進運転システムソフト開発</a>
          <Crumb />
          <a href="#model">ソフト要求仕様開発</a>
          <Crumb />
          <a href="#spec">ソフト要求仕様</a>
          <Crumb />
        </div>
        <button className="w-[25px] text-center text-sm leading-4 text-[#222]">»</button>
        <button className="w-[62px] text-center whitespace-nowrap text-[#4a8bc6]">要求ツリー</button>
        <button className="mx-[5px] h-6 w-[68px] rounded-sm bg-[#4a8bc6] text-xs text-white">要求一覧</button>
        <button className="w-[34px] text-xs text-[#4a8bc6]">詳細</button>
        <button className="ml-3 flex w-[67px] justify-center whitespace-nowrap text-[#4a8bc6]">マインドマップ</button>
      </div>

      <EditorToolbar />

      <div className="mt-1.5 flex min-h-0 flex-1 overflow-hidden pl-[27px]">
        <div className="min-w-0 flex-1 overflow-hidden">
          <RequirementTable />
        </div>
        <div className="mr-[26px] flex w-4 flex-col items-center pt-[7px] pb-1.5">
          <UpArrow />
          <div className="mt-1.5 h-[62px] w-[5px] bg-[#c9c9c9]" />
          <span className="mt-auto"><DownArrow /></span>
        </div>
      </div>
      <div className="flex h-[15px] shrink-0 items-center pr-[47px] pl-[34px]">
        <Svg w={5} h={8}><path d="M5 0v8L0 4z" fill="#888" /></Svg>
        <div className="mx-1.5 h-[5px] flex-1 bg-[#c9c9c9]" />
        <span className="ml-2"><Svg w={5} h={8}><path d="M0 0v8l5-4z" fill="#888" /></Svg></span>
      </div>

      {/* pane handles */}
      <button aria-label="左ペインを閉じる" className="absolute top-[251px] -left-px grid h-[30px] w-[9px] place-items-center border border-[#c6c6c6] bg-[#f6f7f6]">
        <Svg w={4} h={8}><path d="M4 0v8L0 4z" fill="#999" /></Svg>
      </button>
      <button aria-label="右ペインを開く" className="absolute top-[263px] right-0 grid h-[30px] w-[9px] place-items-center border border-[#c6c6c6] bg-[#f6f7f6]">
        <Svg w={4} h={8}><path d="M4 0v8L0 4z" fill="#999" /></Svg>
      </button>

      {/* mouse pointer */}
      <Svg w={14} h={20} className="pointer-events-none absolute top-[257px] left-[311px]">
        <path d="M1.5 1.5v15l3.5-3.5 2.5 6 3-1.5-2.5-5.5h5z" fill="#fff" stroke="#333" />
      </Svg>
    </main>
  );
}

/* ---------- status bar ---------- */

function StatusBar() {
  return (
    <footer className="flex h-7 shrink-0 items-center justify-end border-t border-[#d4d6d9] bg-[#e2e3e5]">
      <div className="flex gap-1.5">
        <button aria-label="左ペイン" className="grid h-[22px] w-[22px] place-items-center rounded-sm border border-[#b8bbc0] bg-[#ececee]">
          <Svg w={16} h={14}>
            <rect x="0.5" y="0.5" width="15" height="12" fill="#fff" stroke="#777" />
            <path d="M0 1.5h16" stroke="#777" strokeWidth="3" />
            <path d="M1 3h3v9H1z" fill="#c8ebf7" /><path d="M4.5 3v9" stroke="#777" />
          </Svg>
        </button>
        <button aria-label="下ペイン" className="grid h-[22px] w-[22px] place-items-center">
          <Svg w={16} h={14}>
            <rect x="0.5" y="0.5" width="15" height="12" fill="#fff" stroke="#777" />
            <path d="M0 1.5h16" stroke="#777" strokeWidth="3" />
            <path d="M1 9h14v3H1z" fill="#c8ebf7" /><path d="M1 8.5h14" stroke="#777" />
          </Svg>
        </button>
        <button aria-label="右ペイン" className="grid h-[22px] w-[22px] place-items-center">
          <Svg w={16} h={14}>
            <rect x="0.5" y="0.5" width="15" height="12" fill="#fff" stroke="#777" />
            <path d="M0 1.5h16" stroke="#777" strokeWidth="3" />
            <path d="M9 3h6v9H9z" fill="#c8ebf7" /><path d="M8.5 3v9" stroke="#777" />
          </Svg>
        </button>
        <button aria-label="スタイル" className="grid h-[22px] w-[22px] place-items-center">
          <Svg>
            <path d="M1 4l6-3 8 3-1 5-4 6-3-1-1-3-4-2z" fill="#f5f5f5" stroke="#888" />
            <path d="M1 4l6 3 7-3M3 8l4 2 7-6" stroke="#888" />
            <path d="M9 14l1-4 4-4 2 3-4 5z" fill="#777" />
          </Svg>
        </button>
        <button aria-label="表示設定" className="grid h-[22px] w-[22px] place-items-center">
          <Svg>
            <rect x="0.5" y="1.5" width="15" height="12" fill="#fff" stroke="#777" />
            <path d="M0 2.5h16" stroke="#777" strokeWidth="3" />
            <circle cx="11" cy="11" r="4.5" fill="#fff" />
            <circle cx="11" cy="11" r="3" stroke="#444" strokeWidth="2" strokeDasharray="2 1" />
            <circle cx="11" cy="11" r="1.5" stroke="#444" />
          </Svg>
        </button>
      </div>
      <span className="ml-3 text-xs text-[#444]">100%</span>
      <button aria-label="縮小" className="ml-[17px]"><Svg w={10} h={10}><path d="M0 5.5h10" stroke="#999" /></Svg></button>
      <input
        type="range"
        aria-label="ズーム"
        min={0}
        max={100}
        defaultValue={3}
        className="mx-3 h-3 w-[100px] appearance-none bg-transparent [&::-webkit-slider-runnable-track]:h-px [&::-webkit-slider-runnable-track]:bg-[#999] [&::-webkit-slider-thumb]:-mt-[5px] [&::-webkit-slider-thumb]:h-[11px] [&::-webkit-slider-thumb]:w-[5px] [&::-webkit-slider-thumb]:appearance-none [&::-webkit-slider-thumb]:bg-[#6b6b6b]"
      />
      <button aria-label="拡大"><Svg w={10} h={10}><path d="M0 5.5h10M5.5 1v9" stroke="#888" /></Svg></button>
      <button aria-label="全体表示" className="ml-[21px]">
        <Svg>
          <path d="M8 0l3.5 4h-7zM8 16l3.5-4h-7zM0 8l4-3.5v7zM16 8l-4-3.5v7z" fill="#777" />
          <path d="M8 6l2 2-2 2-2-2z" fill="#999" />
        </Svg>
      </button>
      <button aria-label="通知" className="ml-[22px]">
        <Svg>
          <path d="M7 0h2v2c3 1 3 3 3 6l3 4v1H1v-1l3-4c0-3 0-5 3-6zM6 13h4v2H6z" fill="#333" />
        </Svg>
      </button>
      <Svg w={12} h={14} className="mr-[3px] ml-3">
        <path d="M9 3h2v2H9zM9 7h2v2H9zM9 11h2v2H9zM5 7h2v2H5zM5 11h2v2H5zM1 11h2v2H1z" fill="#8f9499" />
      </Svg>
    </footer>
  );
}

export default function App() {
  return (
    <div className="flex h-screen flex-col overflow-hidden border border-[#3f6cae] bg-[#f0f0f0] font-['DejaVu_Sans','Noto_Sans_CJK_JP',sans-serif] text-[11px] [font-feature-settings:'palt']">
      <TitleBar />
      <MenuTabs />
      <Ribbon />
      <div className="flex min-h-0 flex-1 border-t border-[#c2c4c8]">
        <LeftPane />
        <Editor />
      </div>
      <StatusBar />
    </div>
  );
}
